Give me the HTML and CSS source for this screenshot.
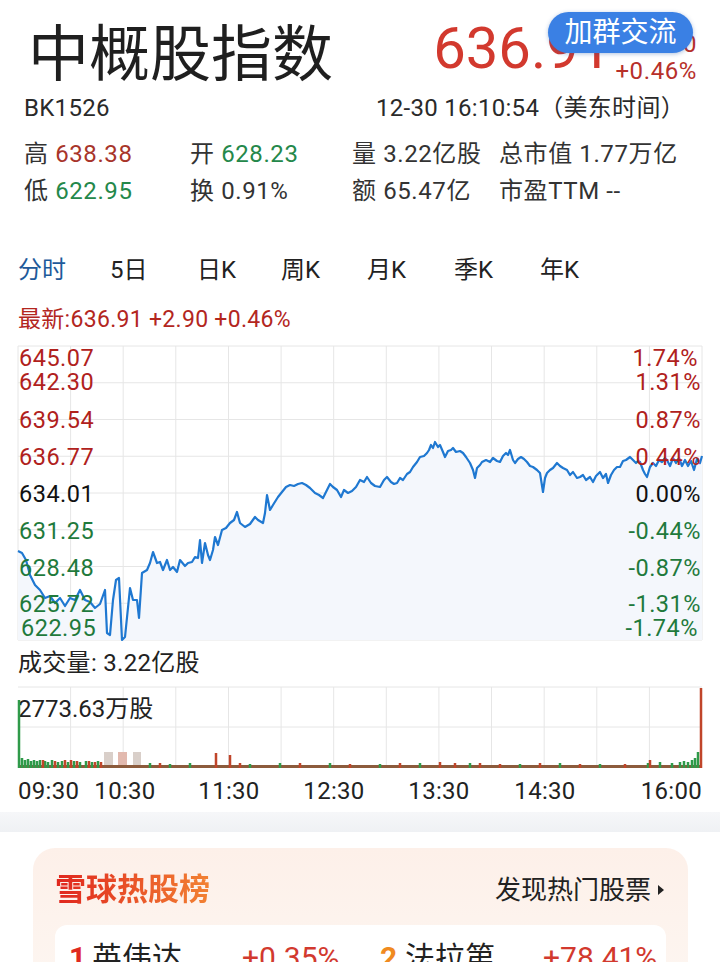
FILE: index.html
```html
<!DOCTYPE html>
<html lang="zh-CN">
<head>
  <meta charset="UTF-8">
  <meta name="viewport" content="width=device-width, initial-scale=1.0">
  <title>中概股指数</title>
  <link rel="stylesheet" href="styles.css">
</head>
<body>

  <!-- Cabecera: nombre del índice y precio -->
  <div class="cabecera">
    <div class="titulo">中概股指数</div>
    <div class="precio">
      <span class="precio-grande">636.91</span>
      <div class="precio-cambio">
        <span>+2.90</span>
        <span>+0.46%</span>
      </div>
    </div>
    <div class="boton-grupo">加群交流</div>
  </div>

  <div class="subtitulo">
    <span>BK1526</span>
    <span>12-30 16:10:54（美东时间）</span>
  </div>

  <div class="datos">
    <div>高 <span class="rojo">638.38</span></div>
    <div>开 <span class="verde">628.23</span></div>
    <div>量 3.22亿股</div>
    <div>总市值 1.77万亿</div>
    <div>低 <span class="verde">622.95</span></div>
    <div>换 0.91%</div>
    <div>额 65.47亿</div>
    <div>市盈TTM --</div>
  </div>

  <div class="pestanas">
    <span class="activa">分时</span>
    <span>5日</span>
    <span>日K</span>
    <span>周K</span>
    <span>月K</span>
    <span>季K</span>
    <span>年K</span>
  </div>

  <div class="ultimo">最新:636.91 +2.90 +0.46%</div>

  <!-- Gráfico de minutos (coordenadas de la página en el viewBox) -->
  <svg class="grafico" width="720" height="305" viewBox="0 340 720 305">
    <g class="rejilla">
      <line x1="18" y1="346" x2="702" y2="346"/>
      <line x1="18" y1="382.75" x2="702" y2="382.75"/>
      <line x1="18" y1="419.5" x2="702" y2="419.5"/>
      <line x1="18" y1="456.25" x2="702" y2="456.25"/>
      <line x1="18" y1="493" x2="702" y2="493"/>
      <line x1="18" y1="529.75" x2="702" y2="529.75"/>
      <line x1="18" y1="566.5" x2="702" y2="566.5"/>
      <line x1="18" y1="603.25" x2="702" y2="603.25"/>
      <line x1="18" y1="640" x2="702" y2="640"/>
      <line x1="18" y1="346" x2="18" y2="640"/>
      <line x1="70.6" y1="346" x2="70.6" y2="640"/>
      <line x1="123.2" y1="346" x2="123.2" y2="640"/>
      <line x1="175.8" y1="346" x2="175.8" y2="640"/>
      <line x1="228.5" y1="346" x2="228.5" y2="640"/>
      <line x1="281.1" y1="346" x2="281.1" y2="640"/>
      <line x1="333.7" y1="346" x2="333.7" y2="640"/>
      <line x1="386.3" y1="346" x2="386.3" y2="640"/>
      <line x1="438.9" y1="346" x2="438.9" y2="640"/>
      <line x1="491.5" y1="346" x2="491.5" y2="640"/>
      <line x1="544.2" y1="346" x2="544.2" y2="640"/>
      <line x1="596.8" y1="346" x2="596.8" y2="640"/>
      <line x1="649.4" y1="346" x2="649.4" y2="640"/>
      <line x1="702" y1="346" x2="702" y2="640"/>
    </g>
    <polygon class="area" points="18,551 22,553 26,560 30,575 35,585 40,590 45,598 50,596 55,603 60,598 65,606 70,598 75,600 80,590 85,600 90,602 95,608 100,604 105,590 107,633 110,635 113,600 116,580 119,578 122,640 125,637 130,588 133,600 137,600 139,618 142,573 147,570 150,563 153,552 157,563 160,562 163,570 167,560 170,570 173,567 177,572 180,560 185,566 188,563 192,562 195,557 198,558 200,540 202,563 205,543 208,555 210,560 213,550 215,537 218,545 222,530 226,528 230,523 234,520 237,512 240,523 245,527 250,524 255,517 258,520 263,523 265,513 267,495 270,510 273,505 278,497 282,492 286,487 290,485 294,486 298,484 302,483 306,485 310,488 315,493 319,495 323,498 326,492 330,484 333,487 337,490 341,497 344,490 348,493 352,491 356,487 360,480 364,482 367,477 371,483 375,486 380,487 384,480 387,477 391,482 394,484 397,483 400,478 403,480 407,474 410,472 413,467 417,462 420,457 424,456 427,453 429,450 431,445 433,448 435,442 438,447 440,445 443,452 445,457 448,451 451,450 453,448 456,452 460,451 463,453 466,457 470,463 473,470 475,478 477,468 480,465 482,462 486,460 490,462 493,458 497,461 500,462 503,456 506,453 508,455 510,450 513,460 515,463 518,459 521,457 524,459 527,462 530,466 533,467 537,470 540,473 543,492 545,478 547,473 550,470 553,468 557,463 560,466 563,468 567,470 570,475 573,472 577,478 580,477 583,475 586,480 590,477 593,482 596,476 600,472 603,478 606,474 608,483 611,475 614,470 617,467 620,467 623,461 626,460 630,457 633,460 636,463 638,461 640,462 643,470 645,474 647,477 650,467 653,463 656,466 659,460 662,462 665,458 667,460 670,466 673,458 676,463 679,458 682,466 685,460 688,466 691,461 694,470 697,459 700,463 702,456 702,640 18,640"/>
    <polyline class="linea" points="18,551 22,553 26,560 30,575 35,585 40,590 45,598 50,596 55,603 60,598 65,606 70,598 75,600 80,590 85,600 90,602 95,608 100,604 105,590 107,633 110,635 113,600 116,580 119,578 122,640 125,637 130,588 133,600 137,600 139,618 142,573 147,570 150,563 153,552 157,563 160,562 163,570 167,560 170,570 173,567 177,572 180,560 185,566 188,563 192,562 195,557 198,558 200,540 202,563 205,543 208,555 210,560 213,550 215,537 218,545 222,530 226,528 230,523 234,520 237,512 240,523 245,527 250,524 255,517 258,520 263,523 265,513 267,495 270,510 273,505 278,497 282,492 286,487 290,485 294,486 298,484 302,483 306,485 310,488 315,493 319,495 323,498 326,492 330,484 333,487 337,490 341,497 344,490 348,493 352,491 356,487 360,480 364,482 367,477 371,483 375,486 380,487 384,480 387,477 391,482 394,484 397,483 400,478 403,480 407,474 410,472 413,467 417,462 420,457 424,456 427,453 429,450 431,445 433,448 435,442 438,447 440,445 443,452 445,457 448,451 451,450 453,448 456,452 460,451 463,453 466,457 470,463 473,470 475,478 477,468 480,465 482,462 486,460 490,462 493,458 497,461 500,462 503,456 506,453 508,455 510,450 513,460 515,463 518,459 521,457 524,459 527,462 530,466 533,467 537,470 540,473 543,492 545,478 547,473 550,470 553,468 557,463 560,466 563,468 567,470 570,475 573,472 577,478 580,477 583,475 586,480 590,477 593,482 596,476 600,472 603,478 606,474 608,483 611,475 614,470 617,467 620,467 623,461 626,460 630,457 633,460 636,463 638,461 640,462 643,470 645,474 647,477 650,467 653,463 656,466 659,460 662,462 665,458 667,460 670,466 673,458 676,463 679,458 682,466 685,460 688,466 691,461 694,470 697,459 700,463 702,456"/>
    <g class="etiquetas">
      <text x="19" y="366" class="e-rojo">645.07</text>
      <text x="19" y="390" class="e-rojo">642.30</text>
      <text x="19" y="428" class="e-rojo">639.54</text>
      <text x="19" y="465" class="e-rojo">636.77</text>
      <text x="19" y="502" class="e-negro">634.01</text>
      <text x="19" y="539" class="e-verde">631.25</text>
      <text x="19" y="576" class="e-verde">628.48</text>
      <text x="19" y="612" class="e-verde">625.72</text>
      <text x="21" y="636" class="e-verde">622.95</text>
      <text x="698" y="366" class="e-rojo derecha">1.74%</text>
      <text x="701" y="390" class="e-rojo derecha">1.31%</text>
      <text x="701" y="428" class="e-rojo derecha">0.87%</text>
      <text x="701" y="465" class="e-rojo derecha">0.44%</text>
      <text x="701" y="502" class="e-negro derecha">0.00%</text>
      <text x="701" y="539" class="e-verde derecha">-0.44%</text>
      <text x="701" y="576" class="e-verde derecha">-0.87%</text>
      <text x="701" y="612" class="e-verde derecha">-1.31%</text>
      <text x="698" y="636" class="e-verde derecha">-1.74%</text>
    </g>
  </svg>

  <div class="volumen-titulo">成交量: 3.22亿股</div>

  <!-- Gráfico de volumen y eje de horas -->
  <svg class="volumen" width="720" height="125" viewBox="0 680 720 125">
    <g class="rejilla">
      <line x1="18" y1="687" x2="702" y2="687"/>
      <line x1="18" y1="727" x2="702" y2="727"/>
      <line x1="70.6" y1="687" x2="70.6" y2="768"/>
      <line x1="123.2" y1="687" x2="123.2" y2="768"/>
      <line x1="175.8" y1="687" x2="175.8" y2="768"/>
      <line x1="228.5" y1="687" x2="228.5" y2="768"/>
      <line x1="281.1" y1="687" x2="281.1" y2="768"/>
      <line x1="333.7" y1="687" x2="333.7" y2="768"/>
      <line x1="386.3" y1="687" x2="386.3" y2="768"/>
      <line x1="438.9" y1="687" x2="438.9" y2="768"/>
      <line x1="491.5" y1="687" x2="491.5" y2="768"/>
      <line x1="544.2" y1="687" x2="544.2" y2="768"/>
      <line x1="596.8" y1="687" x2="596.8" y2="768"/>
      <line x1="649.4" y1="687" x2="649.4" y2="768"/>
    </g>
    <text x="18" y="717" class="v-texto">2773.63万股</text>
    <rect class="borroso" x="104" y="752" width="9" height="16"/>
    <rect class="borroso-rojo" x="118" y="752" width="9" height="16"/>
    <rect class="borroso" x="133" y="752" width="8" height="16"/>
    <rect class="base" x="18" y="765" width="684" height="3"/>
    <path class="barra-verde" d="M19 768V700 M22 768V758 M25 768V760 M28 768V759 M31 768V761 M34 768V760 M37 768V761 M40 768V760 M45 768V761 M48 768V762 M52 768V760 M58 768V762 M62 768V761 M68 768V762 M74 768V761 M80 768V762 M86 768V761 M92 768V762 M98 768V761 M150 768V763 M170 768V764 M190 768V763 M250 768V764 M280 768V763 M330 768V763 M380 768V764 M420 768V763 M470 768V763 M520 768V764 M560 768V763 M600 768V764 M648 768V763 M660 768V762 M672 768V763 M680 768V762 M684 768V761 M688 768V762 M692 768V760 M695 768V758 M698 768V752"/>
    <path class="barra-roja" d="M43 768V760 M55 768V761 M65 768V760 M71 768V760 M77 768V761 M89 768V761 M95 768V762 M101 768V762 M160 768V763 M216 768V753 M230 768V755 M240 768V763 M300 768V763 M350 768V764 M400 768V763 M440 768V762 M455 768V763 M480 768V763 M500 768V764 M540 768V763 M580 768V764 M625 768V764 M650 768V760 M701 768V688"/>
    <g class="horas">
      <text x="18" y="799">09:30</text>
      <text x="125" y="799" class="centro">10:30</text>
      <text x="229" y="799" class="centro">11:30</text>
      <text x="334" y="799" class="centro">12:30</text>
      <text x="439" y="799" class="centro">13:30</text>
      <text x="545" y="799" class="centro">14:30</text>
      <text x="702" y="799" class="derecha">16:00</text>
    </g>
  </svg>

  <div class="separador"></div>

  <!-- Tarjeta de acciones populares -->
  <div class="zona-tarjeta">
    <div class="tarjeta">
      <div class="tarjeta-cabecera">
        <span class="tarjeta-titulo">雪球热股榜</span>
        <span class="tarjeta-enlace">发现热门股票<span class="flechita"></span></span>
      </div>
      <div class="tarjeta-lista">
        <div class="fila">
          <span class="puesto uno">1</span>
          <span class="nombre">英伟达</span>
          <span class="cambio">+0.35%</span>
          <span class="puesto dos">2</span>
          <span class="nombre">法拉第</span>
          <span class="cambio">+78.41%</span>
        </div>
      </div>
    </div>
  </div>

</body>
</html>
```

FILE: styles.css
```css
body {
  font-family: Roboto, "Noto Sans CJK SC", sans-serif;
  background-color: #fff;
  color: #222;
  margin: 0;
  padding: 0;
  overflow: hidden;
}

.cabecera {
  position: relative;
  display: flex;
  justify-content: space-between;
  align-items: flex-start;
  padding: 20px 23px 0 28px;
}

.titulo {
  font-size: 61px;
  line-height: 70px;
  color: #1f1f1f;
}

.precio {
  display: flex;
  align-items: flex-start;
  color: #d2392e;
}

.precio-grande {
  font-size: 58px;
  line-height: 70px;
  margin-top: -7px;
}

.precio-cambio {
  display: flex;
  flex-direction: column;
  align-items: flex-end;
  font-size: 24px;
  letter-spacing: 0.6px;
  line-height: 27px;
  margin-top: 11px;
  padding-left: 4px;
  color: #b7302a;
}

/* Botón flotante encima del precio */
.boton-grupo {
  position: absolute;
  top: 12px;
  right: 27px;
  width: 145px;
  height: 41px;
  line-height: 41px;
  text-align: center;
  font-size: 28px;
  color: #fff;
  background-color: #3a80e4;
  border-radius: 21px;
  box-shadow: 0 1px 4px rgba(30, 80, 160, 0.35);
}

.subtitulo {
  display: flex;
  justify-content: space-between;
  font-size: 24px;
  letter-spacing: 0.3px;
  line-height: 30px;
  margin-top: 3px;
  padding: 0 35px 0 24px;
  color: #2a2a2a;
}

.datos {
  display: grid;
  grid-template-columns: 166px 162px 147px auto;
  font-size: 24px;
  letter-spacing: 0.6px;
  line-height: 37px;
  margin-top: 13px;
  padding-left: 24px;
  color: #333;
}

.rojo { color: #a8352a; }
.verde { color: #24884a; }

.pestanas {
  display: grid;
  grid-template-columns: 92px 87px 84px 86px 87px 86px auto;
  font-size: 24px;
  line-height: 40px;
  margin-top: 40px;
  padding-left: 18px;
  color: #222;
}

.pestanas .activa {
  color: #1e5a9a;
}

.ultimo {
  font-size: 23px;
  letter-spacing: 0.3px;
  line-height: 30px;
  margin-top: 15px;
  padding-left: 18px;
  color: #b3261e;
}

.grafico {
  display: block;
  margin-top: 5px;
}

.rejilla line {
  stroke: #e6e6e6;
  stroke-width: 1;
}

.area {
  fill: #f4f7fc;
}

.linea {
  fill: none;
  stroke: #1f78d1;
  stroke-width: 2.2;
  stroke-linejoin: round;
}

.etiquetas text {
  font-size: 23.5px;
  letter-spacing: 0.5px;
}

.e-rojo { fill: #b0211c; }
.e-negro { fill: #111; }
.e-verde { fill: #1f7a3c; }

.derecha { text-anchor: end; }
.centro { text-anchor: middle; }

.volumen-titulo {
  font-size: 24px;
  letter-spacing: 0.3px;
  line-height: 30px;
  margin-top: 3px;
  padding-left: 18px;
  color: #222;
}

.volumen {
  display: block;
  margin-top: 2px;
}

.v-texto {
  font-size: 24px;
  fill: #222;
}

.base { fill: #8c5b3c; }
.borroso { fill: #d9cfc9; }
.borroso-rojo { fill: #e2b9ae; }

.barra-verde {
  stroke: #2f9a4a;
  stroke-width: 2.5;
}

.barra-roja {
  stroke: #c0452a;
  stroke-width: 2.5;
}

.horas text {
  font-size: 24px;
  letter-spacing: 0.3px;
  fill: #222;
}

.separador {
  height: 20px;
  margin-top: 7px;
  background: linear-gradient(#f6f7f9, #eff1f4);
}

.zona-tarjeta {
  padding: 16px 32px 0 33px;
}

.tarjeta {
  border-radius: 22px 22px 0 0;
  background: linear-gradient(#fdf0e9, #fdf6f1);
  padding: 22px 22px 0 22px;
}

.tarjeta-cabecera {
  display: flex;
  justify-content: space-between;
  align-items: center;
  line-height: 40px;
  margin-bottom: 15px;
}

.tarjeta-titulo {
  font-size: 31px;
  font-weight: bold;
  background: linear-gradient(90deg, #e0261e, #f28233);
  -webkit-background-clip: text;
  background-clip: text;
  color: transparent;
}

.tarjeta-enlace {
  display: flex;
  align-items: center;
  font-size: 26px;
  color: #222;
  padding-right: 2px;
}

.flechita {
  margin-left: 7px;
  border-top: 5px solid transparent;
  border-bottom: 5px solid transparent;
  border-left: 6px solid #222;
}

.tarjeta-lista {
  background-color: #fff;
  border-radius: 12px;
  padding: 13px 12px 10px 14px;
}

.fila {
  display: grid;
  grid-template-columns: 23px 150px 138px 25px 138px auto;
  font-size: 30px;
  line-height: 40px;
  color: #222;
}

.puesto {
  font-weight: bold;
}

.puesto.uno { color: #e02a20; }
.puesto.dos { color: #f08a20; }

.cambio {
  color: #d2392e;
}
```
